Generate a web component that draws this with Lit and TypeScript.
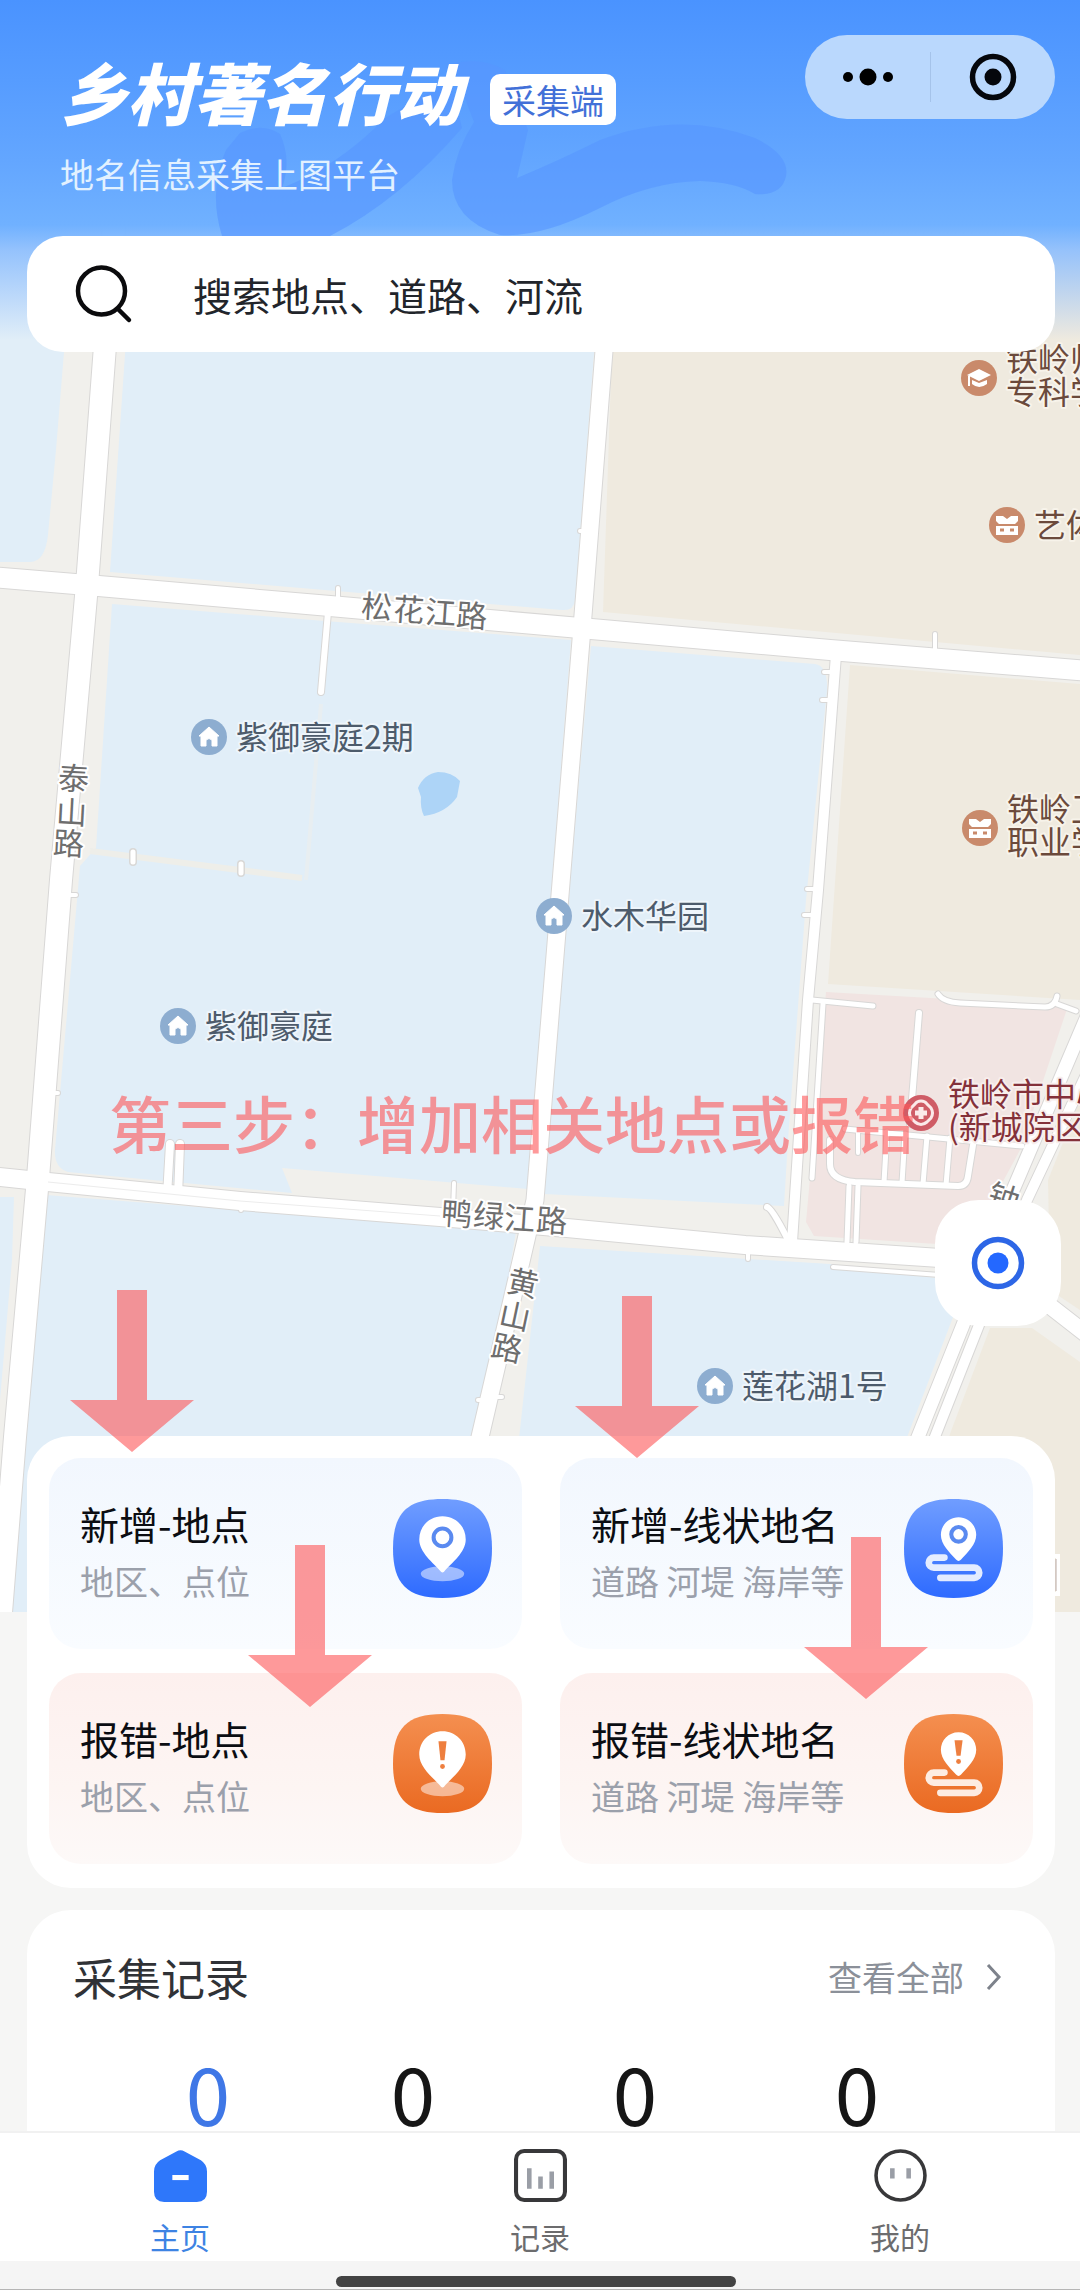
import { LitElement, html, svg, css } from "lit";
import { customElement, property, state } from "lit/decorators.js";
import { classMap } from "lit/directives/class-map.js";

const FONT = css`"Noto Sans CJK SC", "Noto Sans", sans-serif`;

/* ---------- Map ---------- */

type Poi = { x: number; y: number; kind: "home" | "cap" | "school" | "hospital"; lines: string[] };

const POIS: Poi[] = [
  { x: 209, y: 737, kind: "home", lines: ["紫御豪庭2期"] },
  { x: 554, y: 916, kind: "home", lines: ["水木华园"] },
  { x: 178, y: 1026, kind: "home", lines: ["紫御豪庭"] },
  { x: 715, y: 1386, kind: "home", lines: ["莲花湖1号"] },
  { x: 979, y: 378, kind: "cap", lines: ["铁岭师", "专科学"] },
  { x: 1007, y: 525, kind: "school", lines: ["艺体"] },
  { x: 980, y: 828, kind: "school", lines: ["铁岭卫", "职业学"] },
  { x: 921, y: 1113, kind: "hospital", lines: ["铁岭市中心", "(新城院区"] },
];

const BLOCKS: { fill: string; d: string }[] = [
  { fill: "#e1eef8", d: "M0 200H70L64 352L56 450L48 535Q45 562 30 562H0Z" },
  { fill: "#e1eef8", d: "M126 340H595L575 600Q574 611 562 610L110 572Z" },
  { fill: "#e1eef8", d: "M112 604L325 621L571 640L528 1189L282 1168L292 1193L68 1172Q54 1168 55 1150L80 866L96 848Z" },
  { fill: "#e1eef8", d: "M591 646L815 664Q828 666 827 690L806 900L788 1140L784 1206L544 1194L572 860Z" },
  { fill: "#efeadf", d: "M617 200H1080V655L603 612Z" },
  { fill: "#efeadf", d: "M850 665L1080 684V1000L828 984Z" },
  { fill: "#f1e4e2", d: "M826 992L1068 1006L1020 1150L968 1246L814 1236L806 1222L818 1090Z" },
  { fill: "#e1eef8", d: "M0 1197H14L12 1260L0 1400Z" },
  { fill: "#e1eef8", d: "M46 1195L516 1232L450 1613H8Z" },
  { fill: "#e1eef8", d: "M540 1246L830 1264L936 1278L955 1312L906 1440L830 1613H500Z" },
  { fill: "#efeadf", d: "M1080 1100L1048 1180L1050 1290L1080 1310Z" },
  { fill: "#efeadf", d: "M990 1328H1032L1080 1362V1613H890L951 1431Z" },
];

const ROADS: { w: number; d: string }[] = [
  { w: 5, d: "M812 1000L873 1006" },
  { w: 5, d: "M823 1004L812 1178" },
  { w: 6, d: "M919 1013L910 1124" },
  { w: 5, d: "M938 994Q943 1002 960 1003L1045 1007Q1055 1007 1057 996M1057 1004L1076 1011" },
  { w: 5, d: "M845 1129L1022 1146" },
  { w: 6, d: "M830 1140V1164Q830 1180 855 1182L958 1186Q967 1186 968 1176L973 1145" },
  { w: 4, d: "M858 1130V1153" },
  { w: 5, d: "M887 1132L884 1182M905 1134L902 1183M927 1136L923 1184M950 1138L946 1185" },
  { w: 5, d: "M849 1186L847 1242M858 1186L856 1242" },
  { w: 6, d: "M767 1207Q772 1208 788 1240" },
  { w: 4, d: "M833 1267L940 1275" },
  { w: 4, d: "M748 1245V1259" },
  { w: 8, d: "M170 1144L167 1196M180 1144L178 1196" },
  { w: 4, d: "M454 1183L453 1210" },
  { w: 6, d: "M328 612L321 692" },
  { w: 4, d: "M338 588V600M241 1200V1210M60 895H76M45 1093H58M580 531H592M662 632V641M935 634V652M965 658V664" },
  { w: 4, d: "M824 672H834M822 700H832M807 889H818M804 915H816M478 1400H484M484 1397H502" },
  { w: 10, d: "M836 655L818 890L808 1000L792 1242" },
  { w: 13, d: "M1094 1000L1013 1190L963 1325L908 1462" },
  { w: 10, d: "M1100 1045L1027 1200L979 1325L925 1462" },
  { w: 16, d: "M935 1258L1000 1274L1050 1306L1100 1345" },
  { w: 18, d: "M-10 1176L48 1182L240 1201L440 1217L567 1228L745 1245L940 1258" },
  { w: 17, d: "M612 250L582 628L560 895L535 1200L526 1240L470 1480" },
  { w: 20, d: "M-10 577L87 585L330 606L580 628L830 650L1090 671" },
  { w: 22, d: "M116 200L87 585L61 880L38 1178L15 1437L0 1625" },
];

const poiIcon = (kind: Poi["kind"]) => {
  switch (kind) {
    case "home":
      return svg`<circle r="18" fill="#8dadd0"/>
        <path d="M0-10L10-1H8V9H3V3Q0 0-3 3V9H-8V-1H-10Z" fill="#fff" stroke="#fff" stroke-linejoin="round"/>`;
    case "cap":
      return svg`<circle r="18" fill="#c98a6b"/>
        <path d="M0-9L12-3L0 3L-12-3Z" fill="#fff"/><path d="M-10-2V8" stroke="#fff" stroke-width="2"/>
        <path d="M-7 2L0 5L8 2V6Q0 12-7 6Z" fill="#fff"/>`;
    case "school":
      return svg`<circle r="18" fill="#c98a6b"/>
        <path d="M-11-9H-4L0-6L4-9H11V-4L8-1H-8L-11-4Z" fill="#fff"/><path d="M-11 1H11V10H-11Z" fill="#fff"/>
        <path d="M-7 5H-3M3 5H7" stroke="#c98a6b" stroke-width="3"/>`;
    default:
      return svg`<circle r="18" fill="#cf5c66"/>
        <path d="M0-12Q4-12 6-9L10-5Q13 0 10 5L6 9Q0 14-6 9L-10 5Q-13 0-10-5L-6-9Q-4-12 0-12Z" fill="none" stroke="#fbe9e9" stroke-width="3"/>
        <path d="M0-6V6M-6 0H6" stroke="#fbe9e9" stroke-width="5"/>`;
  }
};

@customElement("place-map")
class PlaceMap extends LitElement {
  static styles = css`
    :host { display: block; }
    .canvas { display: block; width: 100%; height: 100%; font-family: ${FONT}; font-size: 32px; }
    .home { fill: #4d5b6b; stroke: #eef5fb; }
    .cap, .school { fill: #6b4a3c; stroke: #f7f3ea; }
    .hospital { fill: #84313a; stroke: #f8eeec; }
    .label { stroke-width: 4px; paint-order: stroke; stroke-linejoin: round; }
    .street { fill: #6e6e6e; stroke: #fff; font-size: 31px; }
  `;

  render() {
    return html`<svg class="canvas" viewBox="0 0 1080 1613" preserveAspectRatio="xMinYMin slice" role="img" aria-label="地图">
      <rect width="1080" height="1613" fill="#f1f0ec" />
      ${BLOCKS.map((b) => svg`<path d=${b.d} fill=${b.fill}/>`)}
      <path d="M90 851L302 878" stroke="#eeeee9" stroke-width="6" />
      <path d="M321 704L306 880" stroke="#e8eef1" stroke-width="4" />
      <path d="M133 852V862M241 864V873" stroke="#d9d8d6" stroke-width="8" stroke-linecap="round" />
      <path d="M133 852V862M241 864V873" stroke="#fff" stroke-width="5" stroke-linecap="round" />
      <path d="M418 788Q424 774 438 772Q452 772 460 781L457 797Q446 813 424 816Q420 808 421 797Z" fill="#add4f7" />
      <g fill="none" stroke="#d8d7d6" stroke-linecap="round" stroke-linejoin="round">
        ${ROADS.map((r) => svg`<path d=${r.d} stroke-width=${r.w + 2}/>`)}
      </g>
      <g fill="none" stroke="#fff" stroke-linecap="round" stroke-linejoin="round">
        ${ROADS.map((r) => svg`<path d=${r.d} stroke-width=${r.w}/>`)}
      </g>
      <path d="M48 1182L240 1201L440 1216" fill="none" stroke="#ececec" />
      <path d="M1048 1556H1058V1594H1048" fill="none" stroke="#fff" stroke-width="4" />
      <path d="M1056 1559V1591" stroke="#b9a9a4" stroke-width="1" />
      <g class="label street" text-anchor="middle">
        <text x="376 408 440 471" y="617 620 623 626" rotate="4">松花江路</text>
        <text x="456 488 519 551" y="1224 1226 1229 1231" rotate="4">鸭绿江路</text>
        <text x="73 71 68" y="789 823 854" rotate="3">泰山路</text>
        <text x="521 513 505" y="1291 1324 1356" rotate="12">黄山路</text>
        <text x="1001" y="1204" rotate="18">钟</text>
      </g>
      ${POIS.map(
        (p) => svg`<g transform="translate(${p.x} ${p.y})">${poiIcon(p.kind)}
          ${p.lines.map(
            (t, i) => svg`<text class="label ${p.kind}" x="27" y=${12 + i * 33 - (p.lines.length - 1) * 19}>${t}</text>`
          )}</g>`
      )}
    </svg>`;
  }
}

/* ---------- Action tiles ---------- */

@customElement("action-tile")
class ActionTile extends LitElement {
  @property() heading = "";
  @property() hint = "";
  @property({ type: Boolean }) report = false;
  @property({ type: Boolean }) line = false;

  static styles = css`
    :host { display: block; }
    .tile {
      display: flex; justify-content: space-between; align-items: flex-start;
      width: 100%; box-sizing: border-box; padding: 41px 30px 46px 31px;
      border: 0; border-radius: 32px; text-align: left; cursor: pointer;
      font-family: ${FONT}; background: linear-gradient(#f2f7fe, #f9fcff);
    }
    .report { background: linear-gradient(#fdf0ee, #fdf5f3 60%, #fdf9f8); }
    .copy { display: flex; flex-direction: column; gap: 12px; }
    .heading { font-size: 39px; line-height: 48px; color: #0b0d12; white-space: nowrap; }
    .hint { font-size: 34px; line-height: 44px; color: #9ba0ab; white-space: nowrap; }
    .icon { flex: none; width: 99px; height: 99px; }
  `;

  render() {
    const top = this.report ? "#f48f50" : "#709dff";
    const bottom = this.report ? "#ea6a22" : "#2e6bff";
    const tint = this.report ? "#ee7f3f" : "#5a8af0";
    const mark = (cx: number, cy: number, r: number) =>
      this.report
        ? svg`<path d="M${cx - 4} ${cy - r}H${cx + 4}L${cx + 2} ${cy + r * 0.7}H${cx - 2}Z" fill=${tint}/>
            <circle cx=${cx} cy=${cy + r + 3} r="2.4" fill=${tint}/>`
        : svg`<circle cx=${cx} cy=${cy} r=${r * 0.8} fill="none" stroke=${tint} stroke-width="4"/>`;
    return html`<button class=${classMap({ tile: true, report: this.report })}>
      <span class="copy">
        <span class="heading">${this.heading}</span>
        <span class="hint">${this.hint}</span>
      </span>
      <svg class="icon" viewBox="0 0 98 98" aria-hidden="true">
        <defs>
          <linearGradient id="face" x1="0" y1="0" x2="0" y2="1">
            <stop offset="0" stop-color=${top} /><stop offset="1" stop-color=${bottom} />
          </linearGradient>
        </defs>
        <path d="M49 0C84 0 98 14 98 49S84 98 49 98S0 84 0 49S14 0 49 0Z" fill="url(#face)" />
        ${this.line
          ? svg`<path d="M40 58H29.5a5 5 0 0 0 0 10H69.5a5 5 0 0 1 0 10H36" fill="none" stroke="#fff" stroke-opacity=".86" stroke-width="6.6" stroke-linecap="round"/>
              <path d="M54 18C64 18 71.500 26 71.500 35.500C71.500 45 63 53 56.500 60Q54 62.500 51.500 60C45 53 36.500 45 36.500 35.500C36.500 26 44 18 54 18Z" fill="#fff"/>
              ${mark(54, 35, 9)}`
          : svg`<ellipse cx="49" cy="74" rx="21.500" ry="7.500" fill="#fff" fill-opacity=".5"/>
              <path d="M49 17C62 17 72 27 72 40C72 53 58 63 50.500 72Q49 73.500 47.500 72C40 63 26 53 26 40C26 27 36 17 49 17Z" fill="#fff"/>
              ${mark(49, 38, 11)}`}
      </svg>
    </button>`;
  }
}

/* ---------- Down arrows drawn over the screen ---------- */

const ARROWS = [
  { x: 70, y: 1290 },
  { x: 575, y: 1296 },
  { x: 248, y: 1545 },
  { x: 804, y: 1537 },
];

/* ---------- Page ---------- */

const TABS = [
  {
    label: "主页",
    icon: svg`<path d="M22 2.500Q26 0 30 2.500L46 11Q52 15 52 22V42Q52 52 42 52H10Q0 52 0 42V22Q0 15 6 11Z" fill="#2e77fa"/>
      <path d="M18 28H34" stroke="#fff" stroke-width="5"/>`,
  },
  {
    label: "记录",
    icon: svg`<rect x="2" y="2" width="48" height="48" rx="8" fill="none" stroke="#38383a" stroke-width="4"/>
      <path d="M15 19V39M26 27V39M37 22V39" stroke="#9a9ea6" stroke-width="4.500"/>`,
  },
  {
    label: "我的",
    icon: svg`<circle cx="26" cy="26" r="24" fill="none" stroke="#38383a" stroke-width="3.500"/>
      <path d="M18 19V29M34 19V29" stroke="#9a9ea6" stroke-width="4.500"/>`,
  },
];

@customElement("app-root")
class AppRoot extends LitElement {
  @state() private tab = 0;

  static styles = css`
    :host { display: block; font-family: ${FONT}; color: #222; }
    .screen { position: relative; display: flex; flex-direction: column; height: 100vh; overflow: hidden; background: #f6f6f5; }
    .main { flex: 1; min-height: 0; display: flex; flex-direction: column; overflow: hidden; }
    .stage { position: relative; flex: 1; display: flex; flex-direction: column; isolation: isolate; }
    .map { position: absolute; inset: 0 0 276px 0; z-index: -2; }
    .sky {
      position: absolute; inset: 0 0 auto 0; height: 345px; z-index: -1;
      background: linear-gradient(#4a93ff 0, #569cff 80px, #63a6ff 160px, #70b1ff 225px, #8fbffdee 250px, #e1eef800 340px);
    }
    .swoosh { position: absolute; left: 0; top: 0; width: 1080px; height: 236px; }

    .header { display: flex; justify-content: space-between; align-items: flex-start; padding: 35px 25px 42px 60px; }
    .brand { display: flex; flex-direction: column; gap: 29px; padding-top: 21px; }
    .title-row { display: flex; align-items: center; gap: 28px; }
    .title { margin: 0; font-size: 67px; line-height: 69px; font-weight: 900; font-style: italic; color: #fff; }
    .badge { padding: 0 12px; border-radius: 10px; background: #fff; color: #4270d8; font-size: 34px; line-height: 51px; margin-top: 18px; }
    .subtitle { margin: 0; font-size: 34px; line-height: 40px; color: #e2f1ff; }
    .capsule { display: flex; align-items: center; height: 84px; border-radius: 42px; background: #bad8fd; }
    .cap-btn { display: flex; align-items: center; justify-content: center; width: 125px; height: 50px; padding: 0; border: 0; background: none; }
    .cap-btn + .cap-btn { border-left: 1px solid #a5c3ea; }

    .search { display: flex; align-items: center; gap: 58px; height: 116px; margin: 0 25px 0 27px; padding: 0 48px; box-sizing: border-box; border-radius: 36px; background: #fff; }
    .search-icon { flex: none; width: 60px; height: 60px; }
    .search-input { flex: 1; min-width: 0; padding: 0; border: 0; outline: 0; background: none; font: 39px/56px ${FONT}; color: #22252b; }
    .search-input::placeholder { color: #22252b; opacity: 1; }

    .map-window { flex: 1; display: flex; justify-content: flex-end; align-items: flex-end; padding: 0 19px 110px; }
    .locate { display: grid; place-items: center; width: 126px; height: 126px; padding: 0; border: 0; border-radius: 44px; background: #fff; }

    .actions { display: grid; grid-template-columns: 1fr 1fr; gap: 24px 38px; margin: 0 25px 0 27px; padding: 22px 22px 24px; border-radius: 44px; background: #fff; }

    .records { margin: 22px 25px 0 27px; border-radius: 44px 44px 0 0; background: #fff; }
    .records-head { display: flex; justify-content: space-between; align-items: center; padding: 35px 53px 0 46px; }
    .records-title { margin: 0; font-size: 44px; line-height: 64px; font-weight: 400; color: #303236; }
    .all { display: flex; align-items: center; gap: 20px; font-size: 34px; line-height: 48px; color: #8b9099; text-decoration: none; }
    .counts { display: grid; grid-template-columns: 188fr 222fr 222fr 222fr; margin: 0; padding: 42px 87px 0; list-style: none; text-align: center; }
    .count { font-size: 80px; line-height: 80px; color: #161616; }
    .count:first-child { color: #3f77e6; }

    .tabs { position: relative; display: grid; grid-template-columns: repeat(3, 1fr); border-top: 2px solid #f1f1f1; background: #fff; }
    .tab { display: flex; flex-direction: column; align-items: center; gap: 12px; padding: 16px 0 3px; font-size: 30px; line-height: 44px; color: #6c6c6e; text-decoration: none; }
    .tab.active { color: #3d83e3; }
    .tab-icon { width: 53px; height: 53px; overflow: visible; }
    .home-bar { display: flex; justify-content: center; padding: 15px 8px 2px 0; background: #f5f5f5; border-bottom: 1px solid #b5b5b5; }
    .home-pill { width: 400px; height: 11px; border-radius: 6px; background: #434343; }

    .notes { position: absolute; inset: 0; pointer-events: none; color: rgba(253, 85, 87, 0.6); }
    .note-text { position: absolute; left: 109px; top: 1084px; margin: 0; font-size: 62px; line-height: 76px; font-weight: 500; white-space: nowrap; }
    .arrows { position: absolute; left: 0; top: 0; width: 1080px; height: 1800px; }
  `;

  render() {
    return html`<div class="screen">
      <main class="main">
        <section class="stage">
          <place-map class="map"></place-map>
          <div class="sky">
            <svg class="swoosh" viewBox="0 0 1080 236" aria-hidden="true">
              <g fill="#5796ff" fill-opacity=".62">
                <path d="M240 133Q262 122 280 134Q292 160 282 188Q340 165 385 118L450 80L462 128Q400 200 330 236H222Q208 190 226 150Z" />
                <path d="M452 64Q480 56 505 70L528 130L517 178Q560 160 600 140Q680 110 755 138Q790 155 786 176Q782 196 755 194Q735 182 700 181Q650 182 600 208Q540 238 500 235Q452 220 452 180Q456 150 474 122Z" />
              </g>
            </svg>
          </div>
          <header class="header">
            <div class="brand">
              <div class="title-row">
                <h1 class="title">乡村著名行动</h1>
                <span class="badge">采集端</span>
              </div>
              <p class="subtitle">地名信息采集上图平台</p>
            </div>
            <div class="capsule">
              <button class="cap-btn" aria-label="更多">
                <svg width="52" height="20" viewBox="0 0 52 20"><circle cx="6" cy="10" r="5" /><circle cx="26" cy="10" r="8.500" /><circle cx="46" cy="10" r="5" /></svg>
              </button>
              <button class="cap-btn" aria-label="关闭">
                <svg width="48" height="48" viewBox="0 0 48 48"><circle cx="24" cy="24" r="20.500" fill="none" stroke="#05070c" stroke-width="5.500" /><circle cx="24" cy="24" r="8.500" fill="#05070c" /></svg>
              </button>
            </div>
          </header>
          <label class="search">
            <svg class="search-icon" viewBox="0 0 60 60" fill="none" stroke="#0b0b0d" stroke-width="4.500" stroke-linecap="round" aria-hidden="true">
              <circle cx="26.500" cy="27" r="23.500" /><path d="M43 45L54 56" />
            </svg>
            <input class="search-input" type="text" aria-label="搜索" placeholder="搜索地点、道路、河流" />
          </label>
          <div class="map-window">
            <button class="locate" aria-label="定位">
              <svg width="54" height="54" viewBox="0 0 54 54"><circle cx="27" cy="27" r="23.500" fill="none" stroke="#2d66e6" stroke-width="5.500" /><circle cx="27" cy="27" r="10.500" fill="#2468ff" /></svg>
            </button>
          </div>
          <div class="actions">
            <action-tile heading="新增-地点" hint="地区、点位"></action-tile>
            <action-tile heading="新增-线状地名" hint="道路 河堤 海岸等" line></action-tile>
            <action-tile heading="报错-地点" hint="地区、点位" report></action-tile>
            <action-tile heading="报错-线状地名" hint="道路 河堤 海岸等" report line></action-tile>
          </div>
        </section>
        <section class="records">
          <div class="records-head">
            <h2 class="records-title">采集记录</h2>
            <a class="all" href="#records">查看全部
              <svg width="18" height="28" viewBox="0 0 18 28" fill="none" stroke="#7d828b" stroke-width="3" aria-hidden="true"><path d="M4 2L15 14L4 26" /></svg>
            </a>
          </div>
          <ul class="counts">
            ${[0, 0, 0, 0].map((n) => html`<li class="count">${n}</li>`)}
          </ul>
        </section>
      </main>
      <nav class="tabs">
        ${TABS.map(
          (t, i) => html`<a class=${classMap({ tab: true, active: i === this.tab })} href="#tab${i}" @click=${() => (this.tab = i)}>
            <svg class="tab-icon" viewBox="0 0 52 52" aria-hidden="true">${t.icon}</svg>${t.label}</a>`
        )}
      </nav>
      <div class="home-bar"><span class="home-pill"></span></div>
      <div class="notes">
        <p class="note-text">第三步：增加相关地点或报错</p>
        <svg class="arrows" viewBox="0 0 1080 1800" fill="currentColor" aria-hidden="true">
          ${ARROWS.map((a) => svg`<path d="M${a.x + 47} ${a.y}h30v110h47l-62 52l-62 -52h47z"/>`)}
        </svg>
      </div>
    </div>`;
  }
}
